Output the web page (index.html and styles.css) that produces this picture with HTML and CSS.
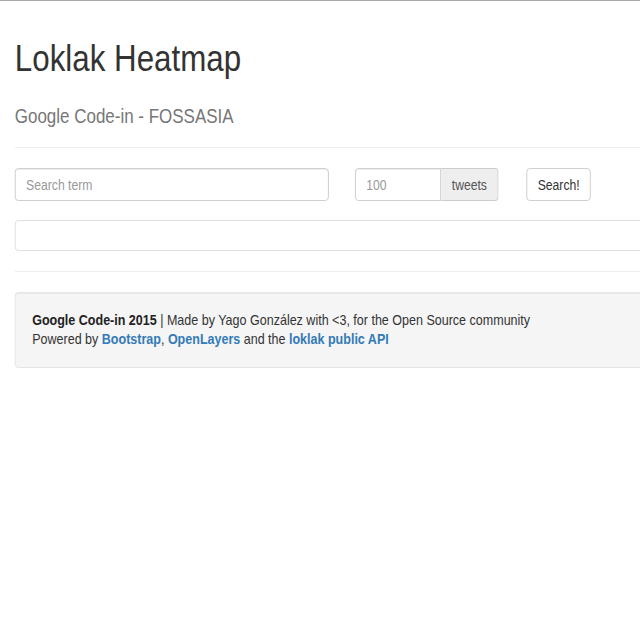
FILE: index.html
```html
<!DOCTYPE html>
<html lang="en">
<head>
<meta charset="utf-8">
<title>Loklak Heatmap</title>
<link rel="stylesheet" href="styles.css">
</head>
<body>
<div class="page">
  <header class="page-header">
    <h1 class="title">Loklak Heatmap</h1>
    <p class="subtitle">Google Code-in - FOSSASIA</p>
  </header>
  <form class="search-row">
    <input class="field field-term" type="text" placeholder="Search term">
    <div class="input-group">
      <input class="field field-count" type="text" placeholder="100">
      <span class="addon">tweets</span>
    </div>
    <button class="btn" type="button">Search!</button>
  </form>
  <div class="result-box"></div>
  <hr class="divider">
  <footer class="well">
    <p class="well-line"><strong>Google Code-in 2015</strong> | Made by Yago González with &lt;3, for the Open Source community</p>
    <p class="well-line">Powered by <a href="#">Bootstrap</a>, <a href="#">OpenLayers</a> and the <a href="#">loklak public API</a></p>
  </footer>
</div>
</body>
</html>
```
FILE: styles.css
```css
html, body {
  margin: 0;
  padding: 0;
  overflow: hidden;
  background: #fff;
}
body {
  border-top: 1px solid #a9a9a9;
  font-family: "Liberation Sans", Arial, sans-serif;
  font-size: 14px;
  color: #333;
}
.page {
  width: 820px;
  box-sizing: border-box;
  padding-left: 17px;
  transform: scaleX(0.87);
  transform-origin: 0 0;
}
.page-header {
  padding-top: 38px;
  padding-bottom: 20px;
  border-bottom: 1px solid #eee;
}
.title {
  margin: 0;
  font-size: 36px;
  line-height: 40px;
  font-weight: 400;
  color: #333;
}
.subtitle {
  margin: 26px 0 0;
  font-size: 19.5px;
  line-height: 22px;
  color: #777;
}
.search-row {
  display: flex;
  align-items: stretch;
  margin-top: 20px;
  height: 33px;
}
.field {
  box-sizing: border-box;
  height: 33px;
  margin: 0;
  padding: 0 12px;
  border: 1px solid #ccc;
  border-radius: 4px;
  background: #fff;
  font-family: inherit;
  font-size: 14px;
  color: #555;
  box-shadow: inset 0 1px 1px rgba(0,0,0,.075);
  outline: none;
}
.field::placeholder {
  color: #999;
  opacity: 1;
}
.field-term {
  width: 361px;
  margin-right: 30px;
}
.input-group {
  display: flex;
  margin-right: 32px;
}
.field-count {
  width: 99px;
  border-radius: 4px 0 0 4px;
}
.addon {
  box-sizing: border-box;
  display: flex;
  align-items: center;
  justify-content: center;
  width: 66px;
  height: 33px;
  border: 1px solid #ccc;
  border-left: 0;
  border-radius: 0 4px 4px 0;
  background: #eee;
  color: #555;
}
.btn {
  box-sizing: border-box;
  height: 33px;
  margin: 0;
  padding: 0 12px;
  border: 1px solid #ccc;
  border-radius: 4px;
  background: #fff;
  font-family: inherit;
  font-size: 14px;
  color: #333;
}
.result-box {
  box-sizing: border-box;
  height: 31px;
  margin-top: 19px;
  border: 1px solid #ddd;
  border-radius: 4px;
  background: #fff;
}
.divider {
  margin: 20px 0 0;
  border: 0;
  border-top: 1px solid #eee;
  height: 0;
}
.well {
  box-sizing: border-box;
  margin-top: 20px;
  padding: 17.5px 19px;
  border: 1px solid #e3e3e3;
  border-radius: 4px;
  background: #f5f5f5;
  box-shadow: inset 0 1px 1px rgba(0,0,0,.05);
}
.well-line {
  margin: 0;
  font-size: 14.4px;
  line-height: 19.6px;
}
.well-line strong {
  font-weight: 700;
  color: #222;
}
.well-line a {
  color: #337ab7;
  font-weight: 700;
  text-decoration: none;
}
```
